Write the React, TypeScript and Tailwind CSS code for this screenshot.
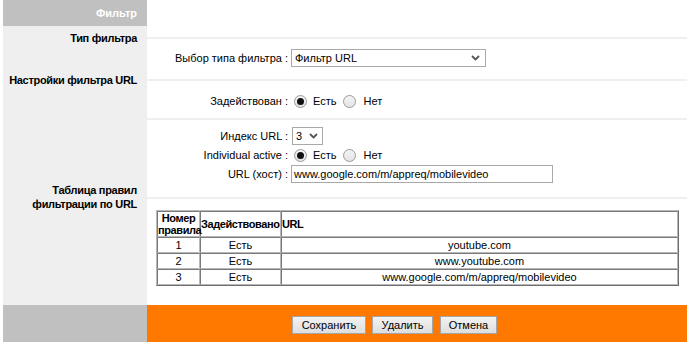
import React from "react";

const Chevron = () => (
  <svg width="9" height="6" viewBox="0 0 9 6" className="text-[#555]">
    <path d="M1 1 L4.5 4.5 L8 1" fill="none" stroke="currentColor" strokeWidth="1.8" />
  </svg>
);

const Radio = ({ checked }: { checked?: boolean }) => (
  <span className="size-[13px] rounded-full border border-[#9a9a9a] bg-gradient-to-b from-[#f4f4f4] to-[#e4e4e4] flex items-center justify-center shrink-0">
    {checked && <span className="size-[7px] rounded-full bg-[#111]" />}
  </span>
);

const YesNo = () => (
  <div className="flex items-center ml-[6px]">
    <Radio checked />
    <span className="ml-[6px]">Есть</span>
    <span className="ml-[7px]">
      <Radio />
    </span>
    <span className="ml-[7px]">Нет</span>
  </div>
);

const Line = () => <div className="h-[2px] bg-[#efefef]" />;

const rules = [
  { n: 1, url: "youtube.com" },
  { n: 2, url: "www.youtube.com" },
  { n: 3, url: "www.google.com/m/appreq/mobilevideo" },
];

const cell = "border border-t-[#7a7a7a] border-l-[#7a7a7a] border-b-[#b8b8b8] border-r-[#b8b8b8] p-0";
const side = "w-[144px] shrink-0 bg-[#efefef] pr-[10px] text-right font-bold leading-[14px] whitespace-nowrap tracking-[-0.3px]";

export default function App() {
  return (
    <div className="w-[694px] h-[347px] bg-white pl-[3px] text-[11px] leading-[13px] text-black font-['Liberation_Sans',Arial,sans-serif]">
      <div className="w-[684px] flex flex-col">
        {/* Header */}
        <div className="flex h-[26px]">
          <div className="w-[144px] bg-[#c0c0c0] text-white font-bold text-right pr-[10px] leading-[26px]">
            Фильтр
          </div>
          <div className="flex-1" />
        </div>

        {/* Filter type */}
        <div className="flex">
          <div className={`${side} pt-[5px]`}>Тип фильтра</div>
          <div className="flex-1 pt-[11px] pb-[6px]">
            <Line />
            <div className="mt-[10px] h-[18px] flex items-center">
              <span className="w-[141px] text-right">Выбор типа фильтра :</span>
              <div className="ml-[3px] w-[195px] h-[18px] border border-[#a9a9a9] flex items-center justify-between pl-[3px] pr-[5px]">
                <span>Фильтр URL</span>
                <Chevron />
              </div>
            </div>
          </div>
        </div>

        {/* URL filter settings */}
        <div className="flex">
          <div className={side}>Настройки фильтра URL</div>
          <div className="flex-1 pt-[6px] pb-[1px]">
            <Line />
            <div className="mt-[10px] h-[20px] flex items-center">
              <span className="w-[141px] text-right">Задействован :</span>
              <YesNo />
            </div>
          </div>
        </div>

        <div className="flex">
          <div className="w-[144px] bg-[#efefef]" />
          <div className="flex-1 pt-[6px]">
            <Line />
            <div className="mt-[6px] h-[20px] flex items-center">
              <span className="w-[141px] text-right">Индекс URL :</span>
              <div className="ml-[4px] w-[31px] h-[18px] border border-[#a9a9a9] flex items-center justify-between pl-[3px] pr-[4px]">
                <span>3</span>
                <Chevron />
              </div>
            </div>
            <div className="h-[19px] flex items-center">
              <span className="w-[141px] text-right">Individual active :</span>
              <YesNo />
            </div>
            <div className="h-[18px] flex items-center">
              <span className="w-[141px] text-right">URL (хост) :</span>
              <div className="ml-[3px] w-[262px] h-[18px] border border-[#a9a9a9] flex items-center pl-[2px]">
                www.google.com/m/appreq/mobilevideo
              </div>
            </div>
          </div>
        </div>

        {/* Rules table */}
        <div className="flex">
          <div className={side}>
            Таблица правил
            <br />
            фильтрации по URL
          </div>
          <div className="flex-1 pt-[14px] pb-[19px]">
            <Line />
            <div className="mt-[11px] pl-[9px] pr-[8px]">
              <table className="w-full table-fixed border-separate border-spacing-0 border border-t-[#b8b8b8] border-l-[#b8b8b8] border-b-[#6e6e6e] border-r-[#6e6e6e]">
                <colgroup>
                  <col className="w-[43px]" />
                  <col className="w-[81px]" />
                  <col />
                </colgroup>
                <thead>
                  <tr className="h-[26px] font-bold tracking-[-0.4px]">
                    <td className={`${cell} text-center leading-[12px]`}>
                      Номер
                      <br />
                      правила
                    </td>
                    <td className={`${cell} whitespace-nowrap`}>Задействовано</td>
                    <td className={cell}>URL</td>
                  </tr>
                </thead>
                <tbody>
                  {rules.map((r) => (
                    <tr key={r.n} className="h-[16px]">
                      <td className={`${cell} text-center`}>{r.n}</td>
                      <td className={`${cell} text-center`}>Есть</td>
                      <td className={`${cell} text-center`}>{r.url}</td>
                    </tr>
                  ))}
                </tbody>
              </table>
            </div>
          </div>
        </div>

        {/* Footer */}
        <div className="flex h-[37px]">
          <div className="w-[144px] bg-[#c0c0c0]" />
          <div className="flex-1 bg-[#ff7800] pl-[145px] pt-[11px] flex items-start">
            <button type="button" className="w-[74px] h-[18px] border border-[#a6a6a6] bg-gradient-to-b from-[#f3f3f3] to-[#dedede] text-[11px] leading-[16px]">
              Сохранить
            </button>
            <button type="button" className="ml-[6px] w-[61px] h-[18px] border border-[#a6a6a6] bg-gradient-to-b from-[#f3f3f3] to-[#dedede] text-[11px] leading-[16px]">
              Удалить
            </button>
            <button type="button" className="ml-[7px] w-[57px] h-[18px] border border-[#a6a6a6] bg-gradient-to-b from-[#f3f3f3] to-[#dedede] text-[11px] leading-[16px]">
              Отмена
            </button>
          </div>
        </div>
      </div>
    </div>
  );
}
